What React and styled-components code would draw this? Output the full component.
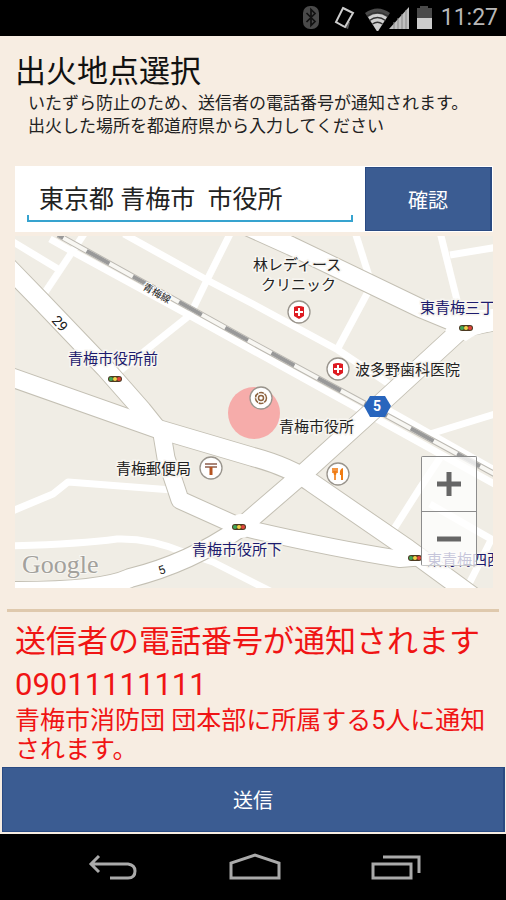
import React from 'react';
import styled, { createGlobalStyle } from 'styled-components';

const minorRoads = [
    'M10 240 L58 269',
    'M84 234 L44 294',
    'M50 239 L75 253 L185 313 L500 487',
    'M124 234 L207 280 L253 304 L338 350 L392 386',
    'M231 232 L207 280 L190 315 L116 374',
    'M355 232 L369 276',
    'M369 290 L338 348',
    'M440 232 L457 300',
    'M450 255 L498 247',
    'M430 434 L498 413',
    'M388 410 L498 472',
    'M392 532 L420 488 L440 458',
    'M430 504 L498 543',
    'M491 540 L466 590',
    'M10 512 L53 494 L68 482 L172 490',
    'M10 546 Q80 544 117 539 Q150 538 183 552 L213 562 L272 592',
];

const majorRoads = [
    { d: 'M5 264 L40 300 L105 368 L142 410 L158 430', w: 18 },
    { d: 'M162 434 L166 458 L180 500 L240 527', w: 17 },
    { d: 'M5 375 L158 429 L253 457 Q290 467 312 483 L408 549 L475 598', w: 18 },
    { d: 'M240 527 Q330 548 400 559 L425 557', w: 16 },
    { d: 'M466 325 L380 404 L305 472 L240 528 Q190 563 130 578 Q100 592 5 591', w: 18 },
    { d: 'M240 223 L291 246 L420 308 L466 327 L500 320', w: 18 },
];

const labels = [
    { x: 253, y: 270, text: '林レディース' },
    { x: 261, y: 290, text: 'クリニック' },
    { x: 355, y: 375, text: '波多野歯科医院' },
    { x: 279, y: 432, text: '青梅市役所' },
    { x: 116, y: 474, text: '青梅郵便局' },
    { x: 420, y: 313, text: '東青梅三丁', crossing: true },
    { x: 68, y: 364, text: '青梅市役所前', crossing: true },
    { x: 192, y: 555, text: '青梅市役所下', crossing: true },
    { x: 427, y: 565, text: '東青梅四西', crossing: true },
];

const signals = [[115, 379], [466, 328], [239, 527], [415, 558]];

const railLine = 'M58 235 L253 343 L371 407 L498 476';

const StatusIcons = () => (
    <svg width="134" height="26" viewBox="302 5 134 26" aria-hidden="true">
        <rect x="305" y="6" width="16" height="23" rx="7" fill="#4a4a4a" />
        <path d="M308.5 13 L317 21.5 L313 25.5 V9.500 L317 13.5 L308.5 22" fill="none" stroke="#111" strokeWidth="1.7" />
        <path d="M337 21 L343 26 L350 29 L352 22 Z" fill="#555" />
        <path d="M345 8 L355 13 L347 27 L338 22 Z" fill="#000" stroke="#ccc" strokeWidth="2" />
        <path d="M367 13 Q379.5 4 392 13 L379.5 32 Z" fill="#4a4a4a" />
        <path d="M370 17 Q379.5 10.5 389 17 L379.5 32 Z" fill="#d0d0d0" />
        <path d="M369 16 Q379.5 9 390 16 M371.5 20.5 Q379.5 14.5 387.5 20.5 M374.5 24 Q379.5 20.5 384.5 24" fill="none" stroke="#333" strokeWidth="1.5" />
        <path d="M411 7 V29 H391 Z" fill="#c0c0c0" />
        <path d="M396 22 V29 M400 18 V29 M404 14 V29 M408 10 V29" stroke="#888" />
        <path d="M419 8 H422 V6 H430 V8 H434 V19 H419 Z" fill="#4a4a4a" />
        <path d="M419 18 H434 V29 H419 Z" fill="#ccc" />
    </svg>
);

const Pin = ({ x, y, children }) => (
    <g transform={`translate(${x} ${y})`}>
        <circle r="11" fill="#fff" stroke="#99948c" strokeWidth="1.3" />
        {children}
    </g>
);

const Hospital = () => (
    <>
        <path d="M-5 -5 Q0 -7 5 -5 V4 L0 7 L-5 4 Z" fill="#de1b22" />
        <path d="M0 -4 V4 M-4 0 H4" stroke="#fff" strokeWidth="2" />
    </>
);

const StreetMap = () => (
    <MapDrawing viewBox="15 236 478 352" preserveAspectRatio="xMidYMid slice" role="img" aria-label="青梅市役所周辺の地図">
        <rect x="-500" y="236" width="1500" height="352" fill="#f0ede5" />
        <g fill="none" stroke="#fff" strokeWidth="7" strokeLinejoin="round">
            {minorRoads.map((d) => <path key={d} d={d} />)}
        </g>
        <g fill="none" stroke="#c4c0b4" strokeLinejoin="round">
            {majorRoads.map(({ d, w }) => <path key={d} d={d} strokeWidth={w + 2} />)}
        </g>
        <g fill="none" stroke="#fff" strokeLinejoin="round">
            {majorRoads.map(({ d, w }) => <path key={d} d={d} strokeWidth={w} />)}
        </g>
        <path d="M445 331 L466 341 Q476 333 494 331 V309 L455 312 Z" fill="#fff" />
        <circle cx="241" cy="526" r="12" fill="#fff" />

        {/* 線路 */}
        <g fill="none">
            <path d={railLine} stroke="#bcb9b2" strokeWidth="6" />
            <path d={railLine} stroke="#f8f7f3" strokeWidth="4" />
            <path d={railLine} stroke="#999" strokeWidth="4" strokeDasharray="26 26.8" strokeDashoffset="20" />
        </g>

        <circle cx="254" cy="413" r="26" fill="#f5a9a7" fillOpacity="0.95" />
        <Pin x={261} y={398}>
            <circle r="5.5" fill="none" stroke="#8d6340" strokeWidth="1.5" strokeDasharray="5 0.8" />
            <circle r="2.5" fill="none" stroke="#8d6340" strokeWidth="1.5" />
        </Pin>
        <Pin x={299} y={312}><Hospital /></Pin>
        <Pin x={338} y={369}><Hospital /></Pin>
        <Pin x={211} y={468}>
            <path d="M-6 -4 H6 M-6 -1 H6" fill="none" stroke="#a98578" strokeWidth="2" />
            <path d="M0 -1 V7" fill="none" stroke="#b5531f" strokeWidth="3" />
        </Pin>
        <Pin x={338} y={474}>
            <path d="M-5 -6 V-1 M-3 -6 V-1 M-1 -6 V-1 M-3 -1 V6" fill="none" stroke="#f07c13" strokeWidth="1.6" />
            <path d="M-5 -3 H-1 L-2 1 H-4 Z M5 -6 Q1 -5 2 1 H3 V6 H5 Z" fill="#f07c13" />
        </Pin>

        <path d="M364 406 L370 396 H385 L391 406 L385 417 H370 Z" fill="#2865bd" />
        <ShieldText x="377" y="411">5</ShieldText>

        {signals.map(([x, y]) => (
            <g key={x} transform={`translate(${x} ${y})`}>
                <rect x="-7" y="-3" width="14" height="6" rx="3" fill="#4b3a20" />
                <circle cx="-4" r="2" fill="#3fa757" />
                <circle r="2" fill="#f3d34a" />
                <circle cx="4" r="2" fill="#e0453a" />
            </g>
        ))}

        {labels.map(({ x, y, text, crossing }) => (
            <PlaceName key={text} x={x} y={y} $crossing={crossing}>{text}</PlaceName>
        ))}
        <RoadName transform="translate(51 321) rotate(48)" $size={14}>29</RoadName>
        <RoadName transform="translate(160 575) rotate(-20)" $size={12}>5</RoadName>
        <RoadName transform="translate(142 289) rotate(29)" $size={10}>青梅線</RoadName>
        <Attribution x="22" y="573">Google</Attribution>
    </MapDrawing>
);

const App = () => {
    const [place, setPlace] = React.useState('東京都 青梅市  市役所');

    return (
        <Screen>
            <GlobalStyle />
            <StatusBar>
                <StatusIcons />
                <Clock>11:27</Clock>
            </StatusBar>

            <Content>
                <Title>出火地点選択</Title>
                <Guide>
                    いたずら防止のため、送信者の電話番号が通知されます。<br />
                    出火した場所を都道府県から入力してください
                </Guide>

                <SearchForm onSubmit={(e) => e.preventDefault()}>
                    <InputBox>
                        <Input aria-label="出火場所" value={place} onChange={(e) => setPlace(e.target.value)} />
                    </InputBox>
                    <ConfirmBtn>確認</ConfirmBtn>
                </SearchForm>

                <MapArea>
                    <StreetMap />
                    <ZoomControl>
                        <ZoomBtn type="button" aria-label="拡大">
                            <svg width="24" height="24" viewBox="0 0 24 24"><path d="M12 0 V24 M0 12 H24" stroke="#666" strokeWidth="5" /></svg>
                        </ZoomBtn>
                        <ZoomBtn type="button" aria-label="縮小">
                            <svg width="24" height="24" viewBox="0 0 24 24"><path d="M0 12 H24" stroke="#666" strokeWidth="5" /></svg>
                        </ZoomBtn>
                    </ZoomControl>
                </MapArea>
            </Content>

            <Divider />

            <Notice>
                <Warning>送信者の電話番号が通知されます</Warning>
                <Warning>09011111111</Warning>
                <Detail>青梅市消防団 団本部に所属する5人に通知されます。</Detail>
            </Notice>

            <SendBtn type="button">送信</SendBtn>

            <NavBar>
                <NavBtn aria-label="戻る">
                    <svg width="52" height="32" viewBox="0 0 52 32" fill="none" stroke="#aaa" strokeWidth="3">
                        <path d="M12 3 L4 11 L12 19 M4 11 H41 Q48 12 48 18 Q48 25 41 25 H23" />
                    </svg>
                </NavBtn>
                <NavBtn aria-label="ホーム">
                    <svg width="52" height="32" viewBox="0 0 52 32" fill="none" stroke="#aaa" strokeWidth="3">
                        <path d="M2 25 V10 L26 2 L50 10 V25 Z" />
                    </svg>
                </NavBtn>
                <NavBtn aria-label="最近使ったアプリ">
                    <svg width="52" height="32" viewBox="0 0 52 32" fill="none" stroke="#aaa" strokeWidth="3">
                        <path d="M3 11 H41 V25 H3 Z M13 4 H49 V20" />
                    </svg>
                </NavBtn>
            </NavBar>
        </Screen>
    );
};

const GlobalStyle = createGlobalStyle`
    body {
        margin: 0;
        background-color: #f7ede2;
        font-family: Roboto, "Noto Sans CJK JP", sans-serif;
    }
    * {
        box-sizing: border-box;
    }
    button, input {
        font-family: inherit;
    }
`;

const Screen = styled.div`
    display: flex;
    flex-direction: column;
    min-height: 100vh;
`;

const StatusBar = styled.header`
    display: flex;
    align-items: center;
    justify-content: flex-end;
    gap: 7px;
    height: 36px;
    padding-right: 8px;
    background-color: #000;
`;

const Clock = styled.span`
    color: #b8b8b8;
    font-size: 23px;
    line-height: 36px;
`;

const Content = styled.main`
    padding: 17px 13px 0 15px;
`;

const Title = styled.h1`
    margin: 0;
    font-size: 31px;
    font-weight: 400;
    line-height: 38px;
    color: #111;
`;

const Guide = styled.p`
    margin: 0 0 28px;
    padding: 1px 0 0 13px;
    font-size: 17px;
    line-height: 23px;
    white-space: nowrap;
    color: #222;
`;

const SearchForm = styled.form`
    display: flex;
    height: 66px;
    background-color: #fff;
`;

const InputBox = styled.div`
    flex: 1;
    display: flex;
    padding: 8px 12px 10px 12px;
`;

const Input = styled.input`
    width: 100%;
    min-width: 0;
    padding: 0 12px;
    border: 0;
    border-bottom: 2px solid #36a3cf;
    background: linear-gradient(#36a3cf, #36a3cf) left bottom / 2px 5px no-repeat,
        linear-gradient(#36a3cf, #36a3cf) right bottom / 2px 5px no-repeat;
    font-size: 25px;
    color: #222;
    outline: none;
`;

const BlueBtn = styled.button`
    padding: 0;
    border: 1px solid #2a4a82;
    border-right-width: 2px;
    background-color: #3b5c92;
    color: #fff;
    font-size: 20px;
`;

const ConfirmBtn = styled(BlueBtn)`
    width: 127px;
    margin: 1px 1px 1px 0;
`;

const SendBtn = styled(BlueBtn)`
    height: 65px;
    margin: auto 1px 2px 2px;
`;

const MapArea = styled.section`
    position: relative;
    margin-top: 4px;
`;

const MapDrawing = styled.svg`
    display: block;
    width: 100%;
    height: 352px;
`;

const PlaceName = styled.text`
    font-size: 15px;
    fill: ${(props) => (props.$crossing ? '#1d1b6e' : '#222')};
    stroke: #f7f5f0;
    stroke-width: 3px;
    paint-order: stroke;
`;

const RoadName = styled.text`
    font-size: ${(props) => props.$size}px;
    fill: #222;
    stroke: #fff;
    stroke-width: 2px;
    paint-order: stroke;
`;

const ShieldText = styled.text`
    font-size: 14px;
    font-weight: 700;
    text-anchor: middle;
    fill: #fff;
`;

const Attribution = styled.text`
    font-family: "Liberation Serif", serif;
    font-size: 26px;
    fill: #a3a19c;
    stroke: #f7f6f2;
    stroke-width: 2px;
    paint-order: stroke;
`;

const ZoomControl = styled.div`
    position: absolute;
    right: 16px;
    bottom: 22px;
    width: 56px;
    border: 1px solid #8c8c8c;
    border-bottom-color: #c8c8c8;
    border-radius: 2px;
`;

const ZoomBtn = styled.button`
    display: flex;
    align-items: center;
    justify-content: center;
    width: 100%;
    height: 54px;
    padding: 0;
    border: 0;
    background-color: rgba(255, 255, 255, 0.75);

    & + & {
        border-top: 1px solid #8c8c8c;
    }
`;

const Divider = styled.hr`
    width: calc(100% - 14px);
    height: 3px;
    margin: 21px auto 0;
    border: 0;
    background-color: #dfc9ad;
`;

const Notice = styled.section`
    padding: 8px 14px 2px 15px;
    color: #f01414;
`;

const Warning = styled.p`
    margin: 0;
    font-size: 31px;
    line-height: 43px;
`;

const Detail = styled.p`
    margin: 0;
    font-size: 25px;
    line-height: 29px;
`;

const NavBar = styled.nav`
    display: flex;
    align-items: center;
    justify-content: space-between;
    height: 66px;
    padding: 0 84px 0 87px;
    background-color: #000;
`;

const NavBtn = styled.button`
    display: flex;
    padding: 4px 0 0;
    border: 0;
    background: none;
`;

export default App;
